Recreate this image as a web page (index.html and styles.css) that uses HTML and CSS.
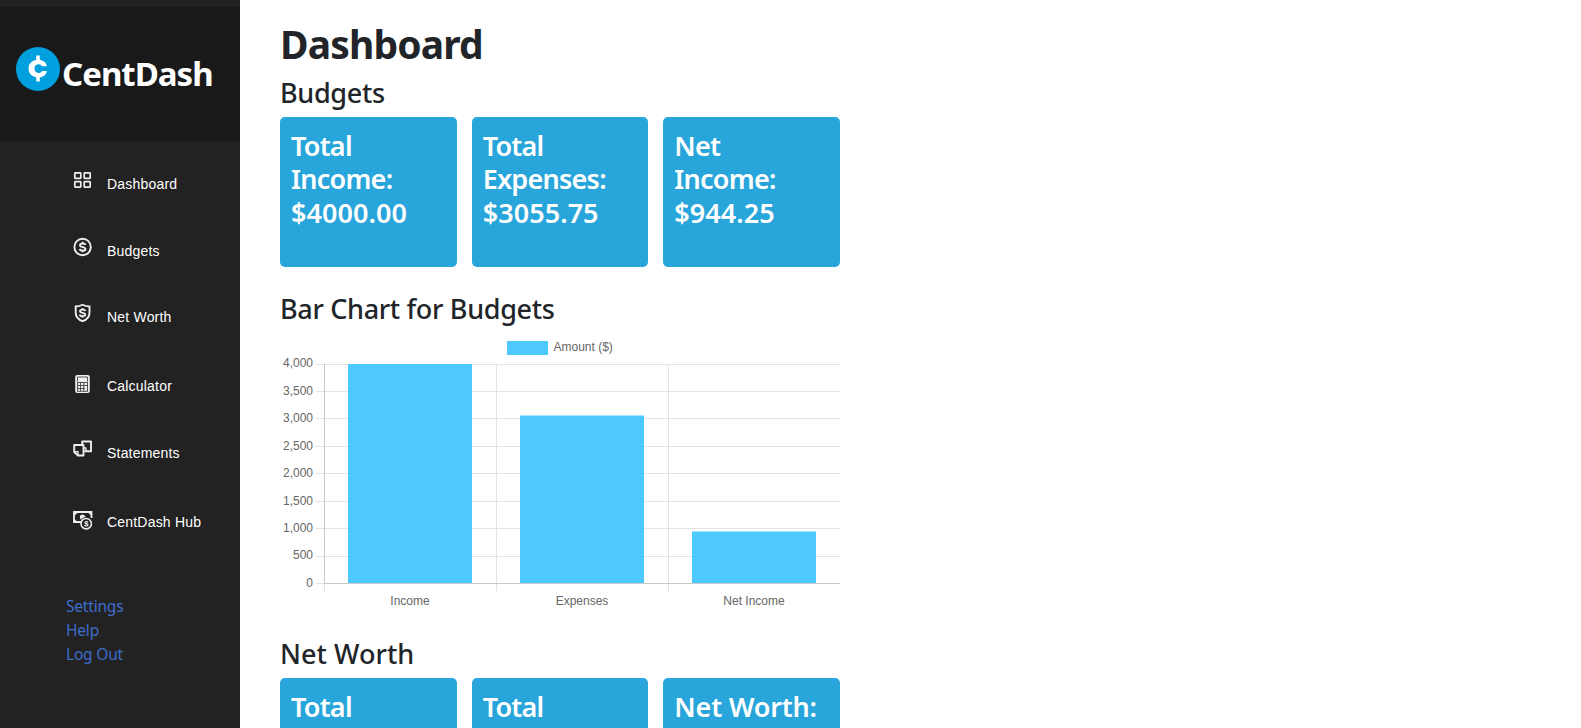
FILE: index.html
```
<!DOCTYPE html>
<html lang="en">
<head>
<meta charset="utf-8">
<title>CentDash</title>
<link rel="stylesheet" href="styles.css">
</head>
<body>
<div class="layout">
<aside class="sidebar">
  <div class="brand">
    <svg class="coin" width="44" height="44" viewBox="0 0 44 44"><circle cx="22" cy="22" r="22" fill="#009fde"/><path d="M30.800 19.300H26C25 16.500 18.500 16 18.500 21.600C18.500 27.200 25 26.700 26 23.900H30.800C30 33 12.500 33 12.500 21.600C12.500 10.200 30 10.200 30.800 19.300Z" fill="#fff"/><path d="M20.200 8.500h3.600v6h-3.600zM20.200 28h3.600v6.500h-3.600z" fill="#fff"/></svg>
    <span class="brand-name">CentDash</span>
  </div>
  <nav class="nav">
    <a class="item"><svg class="icon" viewBox="0 0 20 20"><g fill="none" stroke="#eee" stroke-width="1.700"><rect x="1.800" y="2.800" width="6" height="5.500" rx=".6"/><rect x="11.200" y="2.800" width="6" height="5.500" rx=".6"/><rect x="1.800" y="11.700" width="6" height="5.500" rx=".6"/><rect x="11.200" y="11.700" width="6" height="5.500" rx=".6"/></g></svg><span>Dashboard</span></a>
    <a class="item"><svg class="icon" viewBox="0 0 20 20"><g fill="none" stroke="#eee" stroke-width="1.900"><circle cx="9.600" cy="10" r="8.200"/><path d="M12.500 8C12 6 7 6 7 8.200C7 10.600 12.500 9.500 12.500 12C12.500 14.200 7 14.200 6.700 12M9.700 4.800V6.700M9.700 13.500V15.300"/></g></svg><span>Budgets</span></a>
    <a class="item"><svg class="icon" viewBox="0 0 20 20"><g fill="none" stroke="#eee" stroke-width="1.900"><path d="M9.600 1.800C7.500 3 5 3.500 2.700 3.500V9.500C2.700 14 6 17 9.600 18.200C13.200 17 16.500 14 16.500 9.500V3.500C14 3.500 11.700 3 9.600 1.800Z"/><path d="M12.300 8C12 6.200 7 6.200 7 8.200C7 10.300 12.300 9.300 12.300 11.600C12.300 13.700 7 13.700 6.700 11.600M9.600 5V6.700M9.600 13.200V14.700"/></g></svg><span>Net Worth</span></a>
    <a class="item calc"><svg class="icon" viewBox="0 0 20 20"><rect x="2.200" y="1" width="14.600" height="18" rx="2" fill="#eee"/><path d="M4.500 7.500V3h10v4.500M4 8.500h11M4 11.500h11M4 14.500h8M4 17.300h11M4.500 8v9M7.500 8v9M10.800 8v9M14.500 8v9" fill="none" stroke="#444" stroke-width=".9"/></svg><span>Calculator</span></a>
    <a class="item"><svg class="icon" viewBox="0 0 20 20"><g fill="none" stroke="#eee" stroke-width="1.900" stroke-linejoin="round"><path d="M9.200 5V2.500H18V12.200H11.500M1.200 6H10.500V16.500H5L1.200 13Z"/><path d="M1.500 12.700H5V16.200M10.800 9H13V12" stroke-width="1.300"/></g></svg><span>Statements</span></a>
    <a class="item hub"><svg class="icon" viewBox="0 0 20 20"><g fill="none" stroke="#eee" stroke-width="1.800"><path d="M8 12H1V2H18.500V8"/><circle cx="13.200" cy="13.700" r="5.200" stroke-width="1.600"/><path d="M15 12.500C14.500 11.200 11.700 11.500 12 13C12.300 14 15 13.500 15 15C14.500 16.200 12 16.200 11.500 15" stroke-width="1.300"/></g><path d="M1 2h4.500L1 6zM18.500 2h-4l4 4zM1 12V8.500L4.500 12zM7 8C6 3.500 12 3.500 12.500 7C10 7.500 8.500 8.500 8 10Z" fill="#eee"/></svg><span>CentDash Hub</span></a>
  </nav>
  <div class="links"><a>Settings</a><a>Help</a><a>Log Out</a></div>
</aside>
<main class="main">
  <h1>Dashboard</h1>
  <h3>Budgets</h3>
  <section class="cards">
    <div class="card"><span>Total</span><span>Income:</span><span class="amount">$4000.00</span></div>
    <div class="card"><span>Total</span><span>Expenses:</span><span class="amount">$3055.75</span></div>
    <div class="card"><span>Net</span><span>Income:</span><span class="amount">$944.25</span></div>
  </section>
  <h3 class="chart-title">Bar Chart for Budgets</h3>
  <svg class="chart" width="560" height="280" viewBox="280 335 560 280">
    <path d="M316 364.500H840M316 391.500H840M316 418.500H840M316 446.500H840M316 473.500H840M316 501.500H840M316 528.500H840M316 556.500H840M496.500 364V591M668.500 364V591M324.500 583V591M316 583.500H324" stroke="#e3e3e3" fill="none"/>
    <path d="M324.500 364V583.500H840" stroke="#c8c8c8" fill="none"/>
    <g class="bars"><path d="M348 364h124v219H348zM520 415.500h124V583H520zM692 531.500h124V583H692zM507 341h41v14h-41z"/></g>
    <path d="M348 391.500h124M348 418.500h124M348 446.500h124M348 473.500h124M348 501.500h124M348 528.500h124M348 556.500h124M520 418.500h124M520 446.500h124M520 473.500h124M520 501.500h124M520 528.500h124M520 556.500h124M692 556.500h124" stroke="#4bc4f8"/>
    <g class="ticks">
      <text x="553.500" y="351">Amount ($)</text>
      <g text-anchor="end"><text x="313" y="367">4,000</text><text x="313" y="395">3,500</text><text x="313" y="422">3,000</text><text x="313" y="450">2,500</text><text x="313" y="477">2,000</text><text x="313" y="505">1,500</text><text x="313" y="532">1,000</text><text x="313" y="559">500</text><text x="313" y="587">0</text></g>
      <g text-anchor="middle"><text x="410" y="605">Income</text><text x="582" y="605">Expenses</text><text x="754" y="605">Net Income</text></g>
    </g>
  </svg>
  <h3 class="worth-title">Net Worth</h3>
  <section class="cards">
    <div class="card"><span>Total</span></div>
    <div class="card"><span>Total</span></div>
    <div class="card"><span class="worth">Net Worth:</span></div>
  </section>
</main>
</div>
</body>
</html>
```
FILE: styles.css
```
* { box-sizing: border-box; }
body { margin: 0; height: 728px; overflow: hidden; background: #fff; color: #212529; font-family: "Segoe UI", "Noto Sans", sans-serif; }
.layout { display: flex; height: 728px; overflow: hidden; }
.sidebar { width: 240px; flex: none; background: #222; padding-top: 7px; border-bottom: 2px solid #231f20; }
.brand { height: 134px; background: #191919; display: flex; padding: 40px 0 0 16px; }
.brand-name { color: #fff; font-weight: 700; font-size: 33px; line-height: 44px; margin: 5px 0 0 2px; letter-spacing: -1px; }
.nav { display: grid; grid-template-rows: 67px 66px 70px 66px 70px 60px; padding: 29px 0 0 73px; }
.item { display: flex; gap: 14px; height: 20px; color: #fff; font: 14px/20px "Liberation Sans", Arial, sans-serif; letter-spacing: 0.2px; }
.item span { padding-top: 4px; white-space: nowrap; }
.calc span, .hub span { padding-top: 3px; }
.calc .icon, .hub .icon { margin-top: 1px; }
.icon { width: 20px; height: 20px; flex: none; }
.links { display: flex; flex-direction: column; padding: 25px 0 0 66px; color: #3e6dcc; font-size: 15.500px; line-height: 24px; letter-spacing: -0.2px; }
.main { width: 600px; padding: 20px 0 0 40px; }
h1, h3 { margin: 0; }
h1 { font-size: 39px; line-height: 48px; font-weight: 700; margin-bottom: 8px; letter-spacing: -0.850px; }
h3 { font-size: 27px; line-height: 33px; font-weight: 500; margin-bottom: 8px; white-space: nowrap; letter-spacing: -0.330px; }
.cards { display: grid; grid-template-columns: repeat(3, 1fr); gap: 15px; }
.card { height: 150px; border-radius: 5px; background: #28a5da; color: #fff; padding: 12px 11px; font-size: 27px; line-height: 33.300px; font-weight: 600; display: flex; flex-direction: column; letter-spacing: -0.750px; }
.card .amount { letter-spacing: 0.050px; }
.card .worth { letter-spacing: -0.200px; }
.chart-title { margin-top: 25px; }
.chart { display: block; margin-top: 10px; }
.bars { fill: #4ec9ff; }
.ticks { fill: #666; font: 12px "Liberation Sans", Arial, sans-serif; }
.worth-title { margin-top: 22px; letter-spacing: 0.050px; }
```
